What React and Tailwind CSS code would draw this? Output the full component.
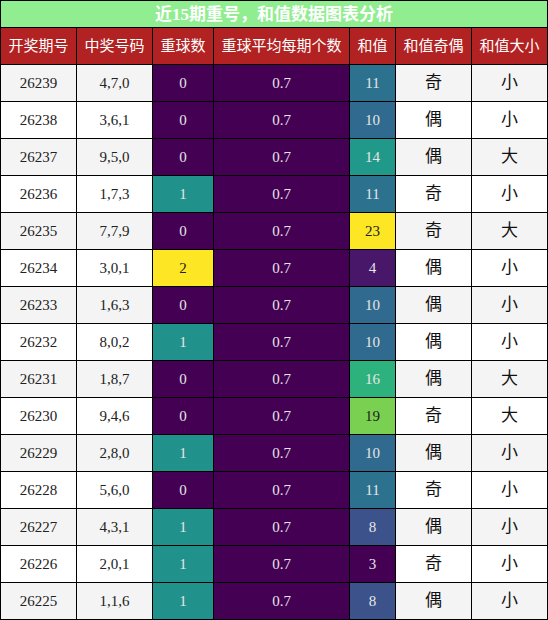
import React from "react";

const rows = [
  ["26239", "4,7,0", 0, 11, "奇", "小"],
  ["26238", "3,6,1", 0, 10, "偶", "小"],
  ["26237", "9,5,0", 0, 14, "偶", "大"],
  ["26236", "1,7,3", 1, 11, "奇", "小"],
  ["26235", "7,7,9", 0, 23, "奇", "大"],
  ["26234", "3,0,1", 2, 4, "偶", "小"],
  ["26233", "1,6,3", 0, 10, "偶", "小"],
  ["26232", "8,0,2", 1, 10, "偶", "小"],
  ["26231", "1,8,7", 0, 16, "偶", "大"],
  ["26230", "9,4,6", 0, 19, "奇", "大"],
  ["26229", "2,8,0", 1, 10, "偶", "小"],
  ["26228", "5,6,0", 0, 11, "奇", "小"],
  ["26227", "4,3,1", 1, 8, "偶", "小"],
  ["26226", "2,0,1", 1, 3, "奇", "小"],
  ["26225", "1,1,6", 1, 8, "偶", "小"],
];

const heavyColors = {
  0: ["#440154", "#e6e6e6"],
  1: ["#21918c", "#e6e6e6"],
  2: ["#fde725", "#222222"],
};

const sumColors = {
  3: ["#440154", "#e6e6e6"],
  4: ["#48176a", "#e6e6e6"],
  8: ["#3b528b", "#e6e6e6"],
  10: ["#306a8e", "#e6e6e6"],
  11: ["#2c728e", "#e6e6e6"],
  14: ["#21998a", "#e6e6e6"],
  16: ["#2db27d", "#e6e6e6"],
  19: ["#7ad151", "#222222"],
  23: ["#fde725", "#222222"],
};

const font = { fontFamily: '"Liberation Serif", "Noto Sans CJK SC", serif' };

function Cell({ children, className = "", style }) {
  return (
    <div
      className={`flex h-[37px] items-center justify-center border-r border-b border-black ${className}`}
      style={style}
    >
      {children}
    </div>
  );
}

export default function App() {
  const headers = ["开奖期号", "中奖号码", "重球数", "重球平均每期个数", "和值", "和值奇偶", "和值大小"];
  return (
    <div
      className="grid w-[548px] grid-cols-[76px_76px_61px_136px_46px_76px_76px] border-l border-t border-black bg-white"
      style={font}
    >
      <div className="col-span-7 flex h-[27px] items-center justify-center border-r border-b border-black bg-[#90ee90] text-[17px] font-bold leading-none text-white">
        近15期重号，和值数据图表分析
      </div>
      {headers.map((h) => (
        <Cell key={h} className="bg-[#b22222] text-[15px] text-white">
          {h}
        </Cell>
      ))}
      {rows.map((r, i) => {
        const bg = i % 2 === 0 ? "bg-[#f4f4f4]" : "bg-white";
        const [hb, ht] = heavyColors[r[2]];
        const [sb, st] = sumColors[r[3]];
        return (
          <React.Fragment key={r[0]}>
            <Cell className={`${bg} text-[15px] text-[#222222]`}>{r[0]}</Cell>
            <Cell className={`${bg} text-[15px] text-[#222222]`}>{r[1]}</Cell>
            <Cell className="text-[15px]" style={{ backgroundColor: hb, color: ht }}>
              {r[2]}
            </Cell>
            <Cell className="bg-[#440154] text-[15px] text-[#e6e6e6]">0.7</Cell>
            <Cell className="text-[15px]" style={{ backgroundColor: sb, color: st }}>
              {r[3]}
            </Cell>
            <Cell className={`${bg} text-[17px] text-[#111111]`}>{r[4]}</Cell>
            <Cell className={`${bg} text-[17px] text-[#111111]`}>{r[5]}</Cell>
          </React.Fragment>
        );
      })}
    </div>
  );
}
